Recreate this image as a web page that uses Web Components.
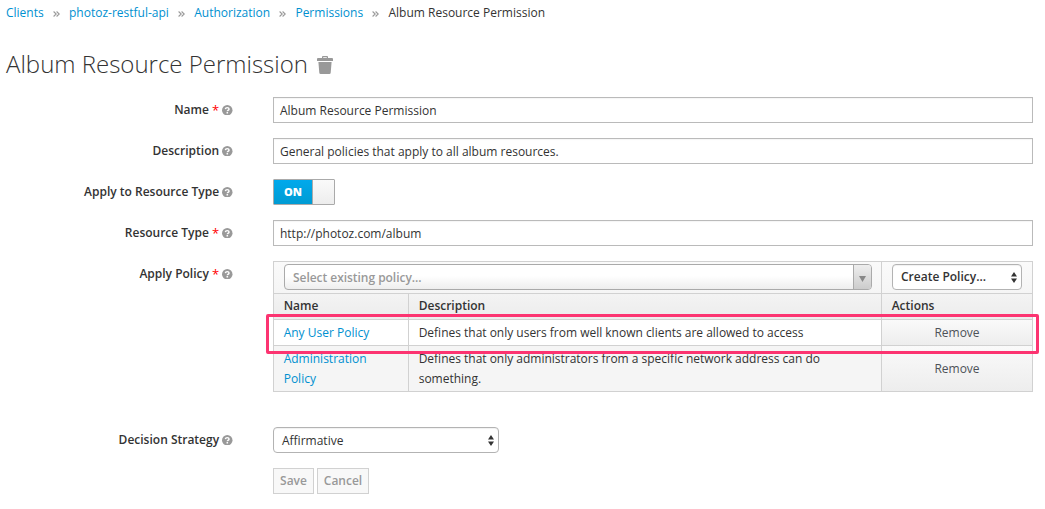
<!DOCTYPE html>
<html lang="en">
<head>
<meta charset="utf-8">
<title>Album Resource Permission</title>
<style>
html, body { margin: 0; background: #fff; }
body { width: 1045px; height: 509px; overflow: hidden; font: 12px/20px "Open Sans", sans-serif; color: #333; }
</style>
</head>
<body>
<permission-page></permission-page>
<script>
function define(name, html) {
  const template = document.createElement('template');
  template.innerHTML = html;
  customElements.define(name, class extends HTMLElement {
    constructor() {
      super();
      this.attachShadow({ mode: 'open' }).append(template.content.cloneNode(true));
    }
  });
}

define('page-link', `
<style>:host{display:inline;color:#0090d0;white-space:nowrap;cursor:pointer}</style><slot></slot>`);

define('crumb-separator', `
<style>:host{display:flex;width:25.3px;justify-content:center;align-items:center}svg{display:block;margin-top:2px}</style>
<svg width="7" height="6" viewBox="0 0 7 6" fill="none" stroke="#999" stroke-width="1.1"><path d="M.6.5 3.2 3 .6 5.5M3.6.5 6.2 3 3.6 5.5"/></svg>`);

define('trash-icon', `
<style>:host{display:block}svg{display:block}</style>
<svg width="16" height="18" viewBox="0 0 16 18" fill="#999"><path fill-rule="evenodd" d="M5 2V1Q5 0 6 0h4q1 0 1 1v1h4q1 0 1 1v2H0V3q0-1 1-1ZM6.2 1.2V2h3.6v-.8Z"/><path d="M1.4 6h13.2l-.9 10.7Q13.600 18 12.400 18H3.600Q2.400 18 2.300 16.700Z"/></svg>`);

define('help-icon', `
<style>:host{display:block}svg{display:block}</style>
<svg width="10.5" height="10.5" viewBox="0 0 10 10"><circle cx="5" cy="5" r="5" fill="#999"/><path d="M3.200 3.900Q3.400 2.500 5 2.500t1.700 1.300Q6.700 4.600 5.700 5.100 5.100 5.400 5.100 6" fill="none" stroke="#fff" stroke-width="1.400"/><path d="M4.300 6.700h1.500v1.400H4.300z" fill="#fff"/></svg>`);

define('form-label', `
<style>
:host{display:flex;width:232.600px;justify-content:flex-end;align-items:center;height:26px;font-weight:600;white-space:nowrap;color:#333}
.star{display:none;color:#f00;font-size:13px;font-weight:400;margin-left:3px;line-height:20px}
:host([required]) .star{display:block}
help-icon{margin-left:3px}
</style><span><slot></slot></span><span class="star">*</span><help-icon></help-icon>`);

define('form-row', `
<style>:host{display:flex;align-items:flex-start;height:26px;margin-bottom:15px}
.label{margin-right:40.400px}</style>
<div class="label"><slot name="label"></slot></div><slot></slot>`);

define('text-field', `
<style>:host{display:flex;align-items:center;box-sizing:border-box;width:760px;height:26px;border:1px solid #bababa;padding:2px 6px 0;color:#333;white-space:nowrap;box-shadow:inset 0 1px 1px rgba(0,0,0,.04)}</style><span><slot></slot></span>`);

define('toggle-switch', `
<style>:host{display:flex;box-sizing:border-box;width:62px;height:26px;border:1px solid #aaa;border-radius:1px;overflow:hidden}
.on{width:38px;display:flex;align-items:center;justify-content:center;background:linear-gradient(#00a9ec,#009bd3);color:#fff;font-weight:800;font-size:11px;margin:-1px 0 -1px -1px;border:1px solid #0093ca;border-right:0}
.knob{flex:1;border-left:1px solid #aaa;background:linear-gradient(#fafafa,#ededed)}</style>
<div class="on"><span><slot></slot></span></div><div class="knob"></div>`);

define('select-box', `
<style>:host{display:flex;align-items:center;justify-content:space-between;box-sizing:border-box;height:26px;border:1px solid #b3b3b3;border-radius:4px;background:#fff;padding:0 4px 0 8px;white-space:nowrap;box-shadow:inset 0 1px 1px rgba(0,0,0,.06)}
svg{display:block}span{padding-top:var(--text-drop,0)}</style>
<span><slot></slot></span><svg width="6" height="11" viewBox="0 0 6 11" fill="#333"><path d="M3 0 6 4.500H0ZM0 6.500h6L3 11Z"/></svg>`);

define('policy-picker', `
<style>:host{display:flex;box-sizing:border-box;width:588px;height:26px;border:1px solid #aaa;border-radius:4px;background:linear-gradient(#fff 45%,#eee);overflow:hidden;color:#999;font-weight:600}
.text{flex:1;padding:3px 8px;letter-spacing:-.04px}
.arrow{width:17px;border-left:1px solid #aaa;background:linear-gradient(#eee,#ccc);display:flex;align-items:center;justify-content:center}
svg{display:block;margin-top:4px}</style>
<div class="text"><slot></slot></div><div class="arrow"><svg width="7" height="6" viewBox="0 0 7 6"><path d="M0 0h7L3.500 6Z" fill="#888"/></svg></div>`);

define('plain-button', `
<style>:host{display:flex;align-items:center;justify-content:center;box-sizing:border-box;height:26px;border:1px solid #d1d1d1;background:#f8f8f8;color:#999;font-weight:600}</style><span><slot></slot></span>`);

define('policy-table', `
<style>
:host{display:block;position:relative;width:760px}
.grid{display:grid;box-sizing:border-box;width:760px;grid-template-columns:135px 473px 151px;grid-template-rows:32px 26px 26px 46px;border-left:1px solid #d1d1d1;border-top:1px solid #d1d1d1}
.grid>div{box-sizing:border-box;border-right:1px solid #d1d1d1;border-bottom:1px solid #d1d1d1;padding:0 9.700px;white-space:nowrap}
.top{background:linear-gradient(#fafafa,#f5f5f5)}
.grid>.pick{grid-column:span 2;padding:2px 9px 0 10px}
.grid>.create{padding:2px 10px 0}
.create select-box{width:130px;font-weight:600}
.head{background:linear-gradient(#f3f3f3,#ececec);font-weight:600;padding-top:2px!important}
.one{padding-top:3px!important}
.two{background:#f5f5f5;padding-top:3px!important}
.text{letter-spacing:-.012px}
.action{background:linear-gradient(#fafafa,#ededed);display:flex;align-items:center;justify-content:center;color:#4d5258}
.mark{position:absolute;left:-7px;top:53px;box-sizing:border-box;width:773px;height:40px;border:3px solid #fc3471;border-radius:2px}
</style>
<div class="grid">
<div class="top pick"><policy-picker>Select existing policy...</policy-picker></div>
<div class="top create"><select-box>Create Policy...</select-box></div>
<div class="head">Name</div><div class="head">Description</div><div class="head">Actions</div>
<div class="one"><page-link>Any User Policy</page-link></div><div class="one text">Defines that only users from well known clients are allowed to access</div><div class="action"><span>Remove</span></div>
<div class="two"><page-link>Administration<br>Policy</page-link></div><div class="two text">Defines that only administrators from a specific network address can do<br>something.</div><div class="action"><span>Remove</span></div>
</div>
<div class="mark"></div>`);

define('permission-page', `
<style>
:host{display:block}
nav{display:flex;height:20px;padding:3px 0 0 6px;white-space:nowrap}
header{display:flex;align-items:flex-start;padding:24px 0 0 6px;height:50px}
h1{margin:0;font-size:24px;line-height:34px;font-weight:300;white-space:nowrap}
trash-icon{margin:9px 0 0 9px}
form-row.table{height:131px;margin-bottom:35px}
.buttons{display:flex;gap:3px;padding-left:273px}
</style>
<nav><page-link>Clients</page-link><crumb-separator></crumb-separator><page-link>photoz-restful-api</page-link><crumb-separator></crumb-separator><page-link>Authorization</page-link><crumb-separator></crumb-separator><page-link>Permissions</page-link><crumb-separator></crumb-separator><span>Album Resource Permission</span></nav>
<header><h1>Album Resource Permission</h1><trash-icon></trash-icon></header>
<form-row><form-label slot="label" required>Name</form-label><text-field>Album Resource Permission</text-field></form-row>
<form-row><form-label slot="label">Description</form-label><text-field>General policies that apply to all album resources.</text-field></form-row>
<form-row><form-label slot="label">Apply to Resource Type</form-label><toggle-switch>ON</toggle-switch></form-row>
<form-row><form-label slot="label" required>Resource Type</form-label><text-field>http://photoz.com/album</text-field></form-row>
<form-row class="table"><form-label slot="label" required>Apply Policy</form-label><policy-table></policy-table></form-row>
<form-row><form-label slot="label">Decision Strategy</form-label><select-box style="width:226px;--text-drop:2px">Affirmative</select-box></form-row>
<div class="buttons"><plain-button style="width:41px">Save</plain-button><plain-button style="width:52px">Cancel</plain-button></div>`);
</script>
</body>
</html>
